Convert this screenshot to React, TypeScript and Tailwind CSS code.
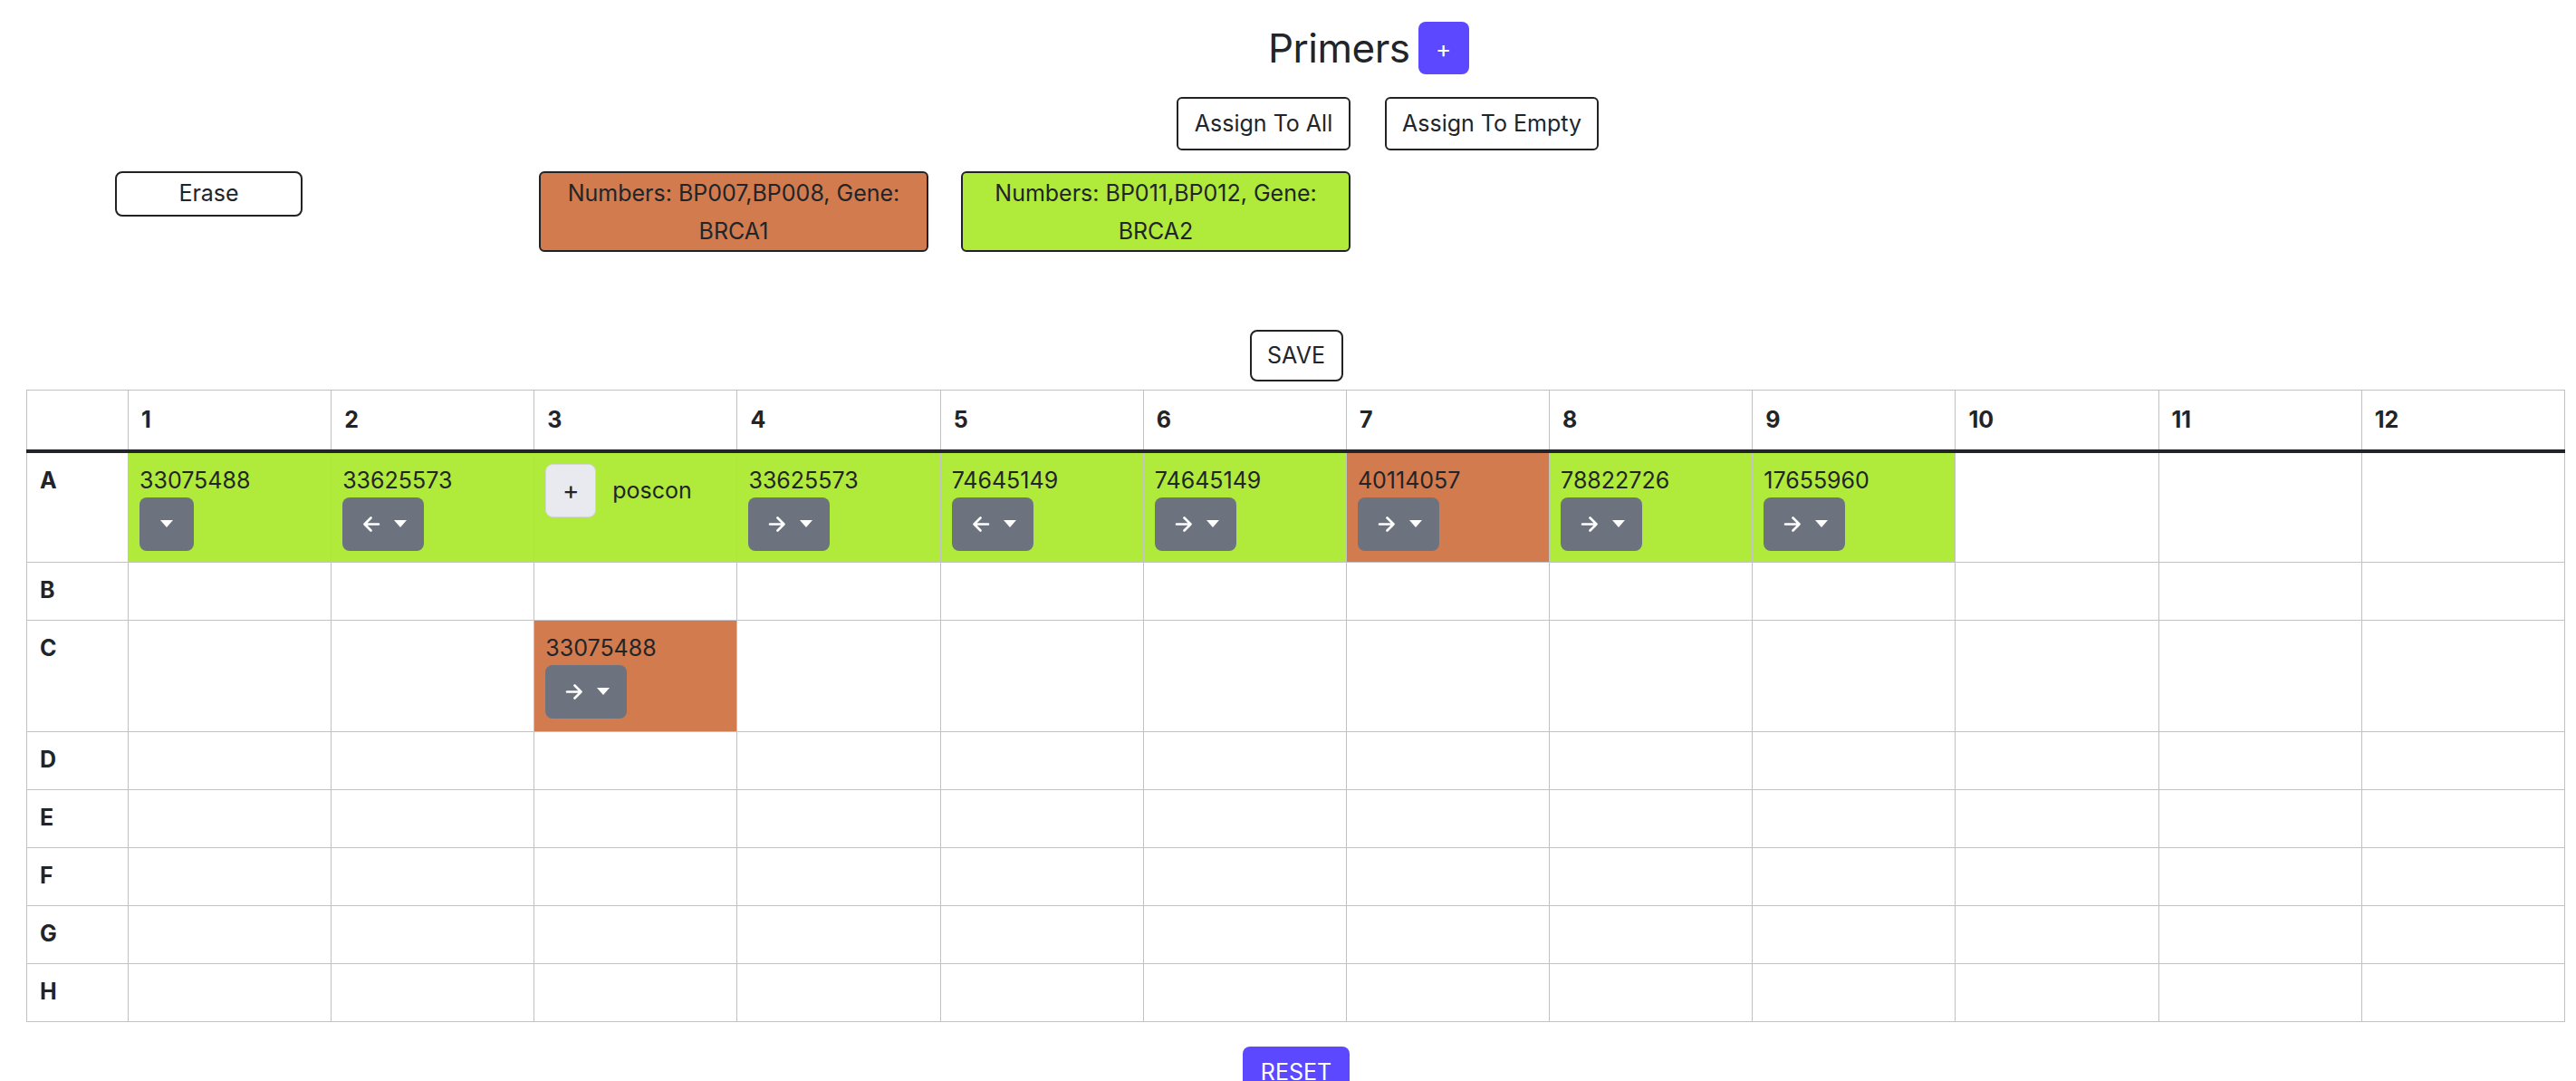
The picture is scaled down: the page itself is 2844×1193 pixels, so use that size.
import React from 'react'

type Cell = {
    n?: string
    dir?: 'l' | 'r' | 'none'
    color?: 'g' | 'o'
    poscon?: boolean
}

const rows: { label: string; tall?: boolean; cells: Cell[] }[] = [
    {
        label: 'A',
        cells: [
            { n: '33075488', dir: 'none', color: 'g' },
            { n: '33625573', dir: 'l', color: 'g' },
            { poscon: true, color: 'g' },
            { n: '33625573', dir: 'r', color: 'g' },
            { n: '74645149', dir: 'l', color: 'g' },
            { n: '74645149', dir: 'r', color: 'g' },
            { n: '40114057', dir: 'r', color: 'o' },
            { n: '78822726', dir: 'r', color: 'g' },
            { n: '17655960', dir: 'r', color: 'g' },
            {},
            {},
            {},
        ],
    },
    { label: 'B', cells: Array.from({ length: 12 }, () => ({})) },
    {
        label: 'C',
        tall: true,
        cells: [{}, {}, { n: '33075488', dir: 'r', color: 'o' }, {}, {}, {}, {}, {}, {}, {}, {}, {}],
    },
    { label: 'D', cells: Array.from({ length: 12 }, () => ({})) },
    { label: 'E', cells: Array.from({ length: 12 }, () => ({})) },
    { label: 'F', cells: Array.from({ length: 12 }, () => ({})) },
    { label: 'G', cells: Array.from({ length: 12 }, () => ({})) },
    { label: 'H', cells: Array.from({ length: 12 }, () => ({})) },
]

const Arrow = ({ left }: { left?: boolean }) => (
    <svg width="20" height="17" viewBox="0 0 20 17" className={left ? 'scale-x-[-1]' : ''}>
        <path d="M2 8.5 H17.5 M10.5 1.5 L17.5 8.5 L10.5 15.5" fill="none" stroke="white" strokeWidth="2.6" strokeLinecap="round" strokeLinejoin="round" />
    </svg>
)

const Caret = () => (
    <svg width="14" height="8" viewBox="0 0 14 8">
        <polygon points="0,0 14,0 7,8" fill="white" />
    </svg>
)

const DirButton = ({ dir }: { dir: 'l' | 'r' | 'none' }) => {
    if (dir === 'none') {
        return (
            <button className="flex items-center justify-center w-[60px] h-[59px] rounded-[8px] bg-[#6c737e]">
                <Caret />
            </button>
        )
    }
    return (
        <button className="flex items-center gap-[15px] pl-[22px] w-[90px] h-[59px] rounded-[8px] bg-[#6c737e]">
            <Arrow left={dir === 'l'} />
            <Caret />
        </button>
    )
}

const App = () => {
    return (
        <main className="min-h-screen bg-white text-[#212529] font-['Inter',sans-serif] text-[25px]">
            {/* title */}
            <section className="flex items-center pt-[24px] pl-[1400px] gap-[9px]">
                <h1 className="text-[44px] leading-[58px] tracking-[-0.5px]">Primers</h1>
                <button className="w-[56px] h-[58px] rounded-[8px] bg-[#5b48ff] text-white text-[26px] flex items-center justify-center">+</button>
            </section>

            <div className="flex pl-[1299px] gap-[38px] mt-[25px]">
                <button className="w-[192px] h-[59px] border-2 border-[#222] rounded-[6px] bg-white">Assign To All</button>
                <button className="w-[236px] h-[59px] border-2 border-[#222] rounded-[6px] bg-white">Assign To Empty</button>
            </div>

            <div className="flex items-start pl-[127px] mt-[23px]">
                <button className="w-[207px] h-[50px] border-2 border-[#222] rounded-[8px] bg-white">Erase</button>
                <div className="ml-[261px] w-[430px] h-[89px] border-2 border-[#222] rounded-[6px] bg-[#d27b4f] flex items-center justify-center px-[14px] text-center leading-[42px]">
                    Numbers: BP007,BP008, Gene: BRCA1
                </div>
                <div className="ml-[36px] w-[430px] h-[89px] border-2 border-[#222] rounded-[6px] bg-[#b0eb3b] flex items-center justify-center px-[14px] text-center leading-[42px]">
                    Numbers: BP011,BP012, Gene: BRCA2
                </div>
            </div>

            <div className="flex justify-center pl-[18px] mt-[86px]">
                <button className="w-[103px] h-[57px] border-2 border-[#222] rounded-[8px] bg-white">SAVE</button>
            </div>

            <table className="table-fixed border-collapse w-[2803px] ml-[29px] mt-[9px]">
                <colgroup>
                    <col className="w-[112px]" />
                    {Array.from({ length: 12 }, (_, i) => (
                        <col key={i} />
                    ))}
                </colgroup>
                <thead>
                    <tr>
                        <th className="h-[67px] border border-[#c2c2c2] border-b-4 border-b-[#212529]"></th>
                        {Array.from({ length: 12 }, (_, i) => (
                            <th key={i} className="h-[67px] border border-[#c2c2c2] border-b-4 border-b-[#212529] text-left font-bold px-[14px]">
                                {i + 1}
                            </th>
                        ))}
                    </tr>
                </thead>
                <tbody>
                    {rows.map((r) => (
                        <tr key={r.label} className={r.tall ? 'h-[123px]' : 'h-[64px]'}>
                            <th className="border border-[#c2c2c2] text-left align-top font-bold px-[14px] pt-[12px] leading-[37px]">
                                {r.label}
                            </th>
                            {r.cells.map((c, i) => (
                                <td
                                    key={i}
                                    className={
                                        'border border-[#c2c2c2] align-top px-[12px] py-[12px] ' +
                                        (c.color === 'g' ? 'bg-[#b0eb3b]' : c.color === 'o' ? 'bg-[#d27b4f]' : '')
                                    }
                                >
                                    {c.poscon ? (
                                        <div className="flex items-center gap-[18px]">
                                            <button className="w-[56px] h-[59px] rounded-[8px] bg-[#e9eaef] border border-[#d3d5da] text-[28px] flex items-center justify-center">+</button>
                                            <span className="leading-[37px]">poscon</span>
                                        </div>
                                    ) : c.n ? (
                                        <div className="flex flex-col items-start">
                                            <span className="leading-[37px]">{c.n}</span>
                                            <DirButton dir={c.dir ?? 'none'} />
                                        </div>
                                    ) : null}
                                </td>
                            ))}
                        </tr>
                    ))}
                </tbody>
            </table>

            <div className="flex justify-center pl-[18px] mt-[27px] pb-[20px]">
                <button className="w-[118px] h-[58px] rounded-[8px] bg-[#5b48ff] text-white">RESET</button>
            </div>
        </main>
    )
}

export default App
